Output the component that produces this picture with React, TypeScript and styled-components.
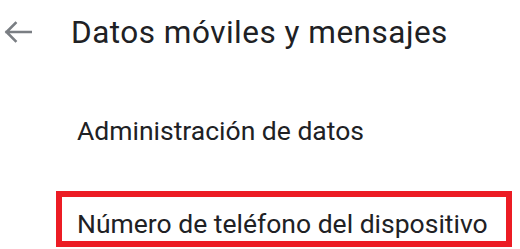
import React from 'react'
import styled, { createGlobalStyle, css } from 'styled-components'

const GlobalStyle = createGlobalStyle`
  html, body {
    margin: 0;
    padding: 0;
    background: #ffffff;
  }
  body {
    font-family: Roboto, 'Noto Sans', Arial, sans-serif;
    color: #202124;
    -webkit-font-smoothing: antialiased;
  }
`

const Page = styled.div`
  width: 520px;
  height: 249px;
  overflow: hidden;
  background: #fff;
`

const Header = styled.header`
  display: flex;
  align-items: center;
  height: 64px;
  padding-left: 4px;
`

const BackButton = styled.button`
  display: flex;
  align-items: center;
  justify-content: center;
  width: 28px;
  height: 28px;
  padding: 0;
  margin-right: 39px;
  border: none;
  background: none;
  color: #7a7e83;
  cursor: pointer;
`

const Title = styled.h1`
  margin: 0;
  font-size: 31.5px;
  font-weight: 400;
  letter-spacing: 0.5px;
  color: #202124;
`

const List = styled.ul`
  display: flex;
  flex-direction: column;
  gap: 37px;
  list-style: none;
  margin: 34px 0 0 56px;
  padding: 0;
`

const Item = styled.li<{ highlighted?: boolean }>`
  display: flex;
  align-items: center;
  box-sizing: border-box;
  width: fit-content;
  height: 56px;
  padding: 8px 18px 0 15px;
  border: 6px solid transparent;
  font-size: 26.5px;
  color: #202124;

  ${(props) =>
    props.highlighted &&
    css`
      border-color: #ec1c24;
    `}
`

const ArrowBack: React.FC = () => (
  <svg width="28" height="22" viewBox="0 0 28 22" fill="none">
    <path
      d="M27 11H2.5M11.5 2L2.5 11l9 9"
      stroke="currentColor"
      strokeWidth="2.6"
      strokeLinecap="square"
    />
  </svg>
)

const App: React.FC = () => {
  return (
    <Page>
      <GlobalStyle />
      <Header>
        <BackButton aria-label="Atrás">
          <ArrowBack />
        </BackButton>
        <Title>Datos móviles y mensajes</Title>
      </Header>
      <List>
        <Item>Administración de datos</Item>
        <Item highlighted>Número de teléfono del dispositivo</Item>
      </List>
    </Page>
  )
}

export default App
